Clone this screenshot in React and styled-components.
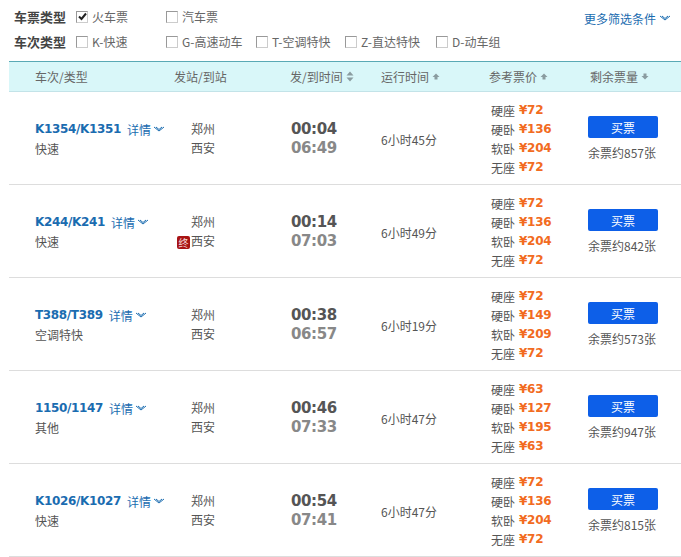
import React from "react";
import styled, { createGlobalStyle } from "styled-components";

const GlobalStyle = createGlobalStyle`
  html, body {
    margin: 0;
    padding: 0;
    background: #fff;
    font-family: "Noto Sans CJK SC", "Liberation Sans", sans-serif;
    font-size: 12px;
    color: #555;
  }
`;

const Page = styled.div`
  width: 681px;
  height: 557px;
  overflow: hidden;
`;

const Filters = styled.div`
  position: relative;
  height: 61px;
  padding: 4px 0 0 14px;
  box-sizing: border-box;
`;

const FilterRow = styled.div`
  display: flex;
  align-items: center;
  height: 25px;
`;

const FilterLabel = styled.b`
  width: 62px;
  font-size: 13px;
  color: #444;
`;

const Check = styled.label`
  width: ${(p) => p.$w}px;
  display: flex;
  align-items: center;
  gap: 4px;
  color: #666;
  white-space: nowrap;
`;

const Box = styled.span`
  width: 12px;
  height: 12px;
  box-sizing: border-box;
  border: 1px solid #999;
  border-right-color: #ccc;
  border-bottom-color: #ccc;
  display: inline-flex;
  align-items: center;
  justify-content: center;
  background: #fff;
`;

const More = styled.a`
  position: absolute;
  right: 10px;
  top: 10px;
  display: flex;
  align-items: center;
  gap: 3px;
  color: #1a6cb0;
`;

const HeadRow = styled.div`
  margin-left: 9px;
  height: 31px;
  box-sizing: border-box;
  border-top: 1px solid #5aa9b5;
  border-bottom: 1px solid #c3e3e8;
  background: #d9f7f9;
  display: grid;
  grid-template-columns: 165px 116px 91px 108px 101px 1fr;
  align-items: center;
  color: #666;
`;

const HeadCell = styled.div`
  display: flex;
  align-items: center;
  gap: 3px;
  padding-left: ${(p) => p.$pad || 0}px;
`;

const Row = styled.div`
  margin-left: 9px;
  height: 93px;
  padding-top: 2px;
  box-sizing: border-box;
  border-bottom: 1px solid #ddd;
  display: grid;
  grid-template-columns: 165px 116px 91px 108px 101px 1fr;
  align-items: center;
`;

const TrainCell = styled.div`
  padding-left: 26px;
  line-height: 19px;
`;

const TrainLine = styled.div`
  display: flex;
  align-items: center;
  gap: 6px;
  color: #1a6cb0;
  white-space: nowrap;
`;

const TrainNo = styled.b`
  font-family: "DejaVu Sans", sans-serif;
  font-size: 12px;
  letter-spacing: -0.35px;
`;

const Detail = styled.span`
  display: flex;
  align-items: center;
  gap: 2px;
`;

const StationCell = styled.div`
  position: relative;
  padding: 0 0 2px 17px;
  line-height: 19px;
`;

const EndMark = styled.span`
  position: absolute;
  left: 3px;
  bottom: 3px;
  width: 13px;
  height: 13px;
  border-radius: 2px;
  background: #a81414;
  color: #f6dcdc;
  font-size: 10px;
  line-height: 13px;
  text-align: center;
`;

const TimeCell = styled.div`
  padding-left: 1px;
  font-family: "DejaVu Sans", sans-serif;
  font-weight: bold;
  font-size: 15px;
  letter-spacing: -0.4px;
  line-height: 19px;
`;

const Depart = styled.div`
  color: #555;
`;

const Arrive = styled.div`
  color: #888;
`;

const PriceCell = styled.div`
  padding-left: 2px;
  line-height: 19px;
`;

const PriceLine = styled.div`
  display: flex;
  gap: 4px;
`;

const Price = styled.b`
  font-family: "DejaVu Sans", sans-serif;
  font-size: 12px;
  letter-spacing: -0.3px;
  color: #f26b21;
`;

const BuyCell = styled.div`
  margin-left: -2px;
  width: 72px;
  padding-bottom: 1px;
`;

const BuyButton = styled.button`
  display: block;
  width: 70px;
  height: 22px;
  padding: 0;
  border: 0;
  border-radius: 2px;
  background: #0d5fe8;
  color: #fff;
  font: inherit;
  margin-bottom: 7px;
`;

const Left = styled.div`
  white-space: nowrap;
  line-height: 16px;
`;

const Chevron = ({ color = "#1a6cb0" }) => (
  <svg width="12" height="8" viewBox="0 0 12 8" fill="none" stroke={color} strokeWidth="1">
    <path d="M1 1l5 4 5-4M3 1l3 2.5L9 1" />
  </svg>
);

const Sort = ({ dir }) => (
  <svg width="8" height="11" viewBox="0 0 8 11" fill="#8a9ca0">
    {dir === "both" && <path d="M4 0.5L7.5 4.5H.5zM4 10.5L7.5 6.5H.5z" />}
    {dir === "up" && <path d="M4 2.5L7.5 6H5.5V8.5H2.5V6H.5z" />}
    {dir === "down" && <path d="M4 8.5L7.5 5H5.5V2.5H2.5V5H.5z" />}
  </svg>
);

const trains = [
  { no: "K1354/K1351", kind: "快速", dep: "00:04", arr: "06:49", run: "6小时45分", prices: [72, 136, 204, 72], left: 857 },
  { no: "K244/K241", kind: "快速", dep: "00:14", arr: "07:03", run: "6小时49分", prices: [72, 136, 204, 72], left: 842, end: true },
  { no: "T388/T389", kind: "空调特快", dep: "00:38", arr: "06:57", run: "6小时19分", prices: [72, 149, 209, 72], left: 573 },
  { no: "1150/1147", kind: "其他", dep: "00:46", arr: "07:33", run: "6小时47分", prices: [63, 127, 195, 63], left: 947 },
  { no: "K1026/K1027", kind: "快速", dep: "00:54", arr: "07:41", run: "6小时47分", prices: [72, 136, 204, 72], left: 815 },
];

const seats = ["硬座", "硬卧", "软卧", "无座"];

const CheckItem = ({ w, checked, children }) => (
  <Check $w={w}>
    <Box>
      {checked && (
        <svg width="9" height="9" viewBox="0 0 9 9" fill="none" stroke="#222" strokeWidth="2">
          <path d="M1 4.5l2.5 2.5L8 1.5" />
        </svg>
      )}
    </Box>
    {children}
  </Check>
);

const App = () => {
  return (
    <Page>
      <GlobalStyle />
      <Filters>
        <FilterRow>
          <FilterLabel>车票类型</FilterLabel>
          <CheckItem w={90} checked>火车票</CheckItem>
          <CheckItem w={90}>汽车票</CheckItem>
        </FilterRow>
        <FilterRow>
          <FilterLabel>车次类型</FilterLabel>
          <CheckItem w={90}>K-快速</CheckItem>
          <CheckItem w={90}>G-高速动车</CheckItem>
          <CheckItem w={89}>T-空调特快</CheckItem>
          <CheckItem w={91}>Z-直达特快</CheckItem>
          <CheckItem w={80}>D-动车组</CheckItem>
        </FilterRow>
        <More>
          更多筛选条件 <Chevron />
        </More>
      </Filters>
      <HeadRow>
        <HeadCell $pad={26}>车次/类型</HeadCell>
        <HeadCell>发站/到站</HeadCell>
        <HeadCell>发/到时间 <Sort dir="both" /></HeadCell>
        <HeadCell>运行时间 <Sort dir="up" /></HeadCell>
        <HeadCell>参考票价 <Sort dir="up" /></HeadCell>
        <HeadCell>剩余票量 <Sort dir="down" /></HeadCell>
      </HeadRow>
      {trains.map((t) => (
        <Row key={t.no}>
          <TrainCell>
            <TrainLine>
              <TrainNo>{t.no}</TrainNo>
              <Detail>详情 <Chevron /></Detail>
            </TrainLine>
            <div>{t.kind}</div>
          </TrainCell>
          <StationCell>
            <div>郑州</div>
            <div>西安</div>
            {t.end && <EndMark>终</EndMark>}
          </StationCell>
          <TimeCell>
            <Depart>{t.dep}</Depart>
            <Arrive>{t.arr}</Arrive>
          </TimeCell>
          <div>{t.run}</div>
          <PriceCell>
            {seats.map((s, i) => (
              <PriceLine key={s}>
                {s} <Price>¥{t.prices[i]}</Price>
              </PriceLine>
            ))}
          </PriceCell>
          <BuyCell>
            <BuyButton>买票</BuyButton>
            <Left>余票约{t.left}张</Left>
          </BuyCell>
        </Row>
      ))}
    </Page>
  );
};

export default App;
